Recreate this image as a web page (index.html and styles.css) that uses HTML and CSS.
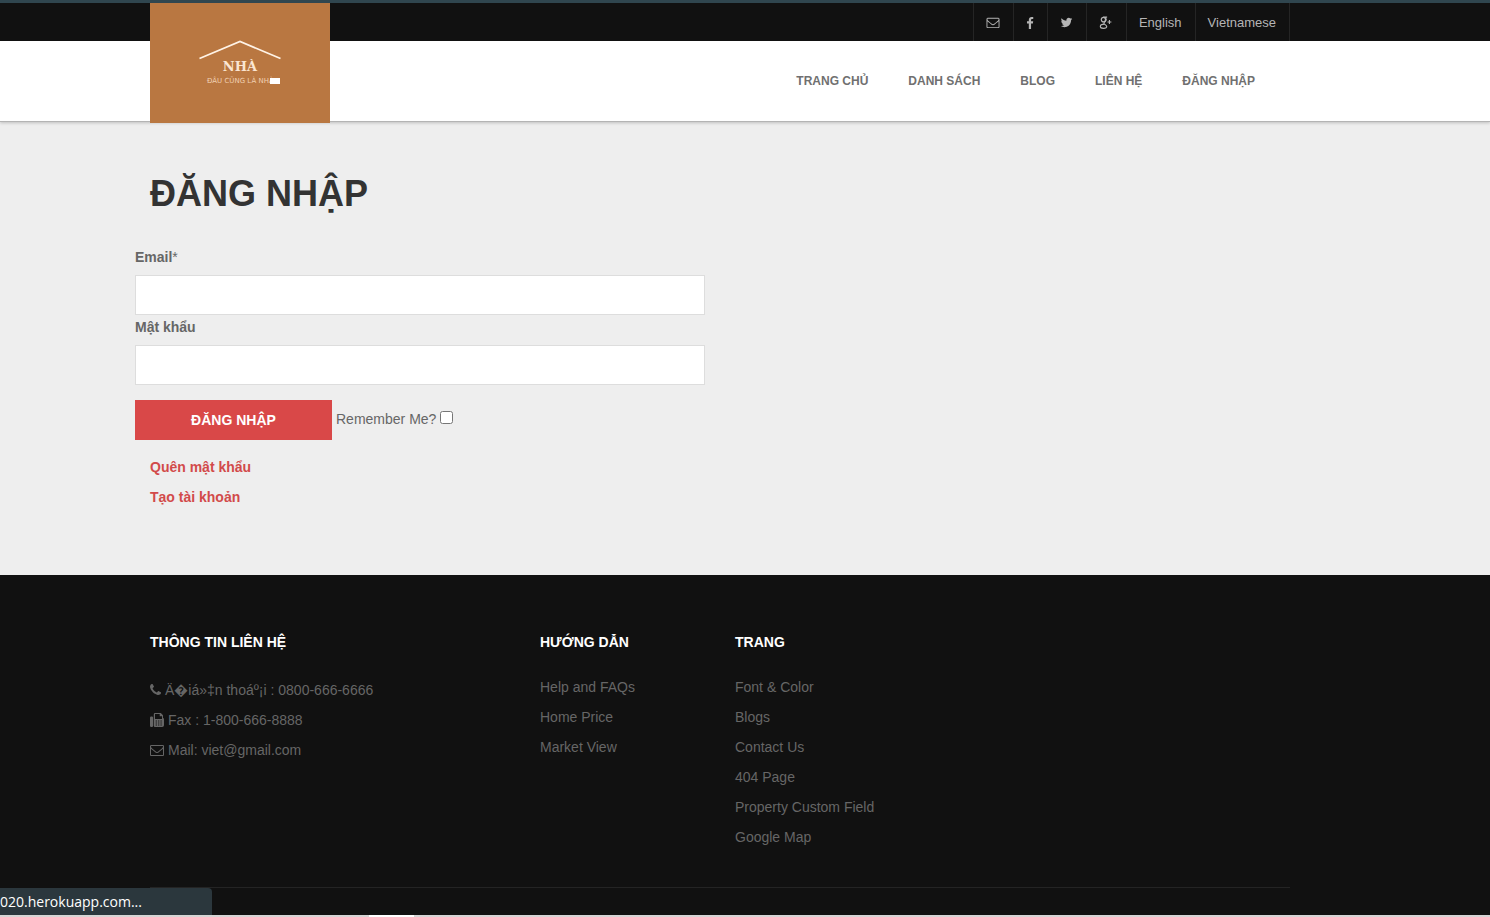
FILE: index.html
```html
<!DOCTYPE html>
<html lang="vi">
<head>
<meta charset="utf-8">
<meta name="viewport" content="width=device-width, initial-scale=1">
<title>Đăng nhập</title>
<link rel="stylesheet" href="styles.css">
</head>
<body>
<svg class="sprite" aria-hidden="true">
  <symbol id="envelope" viewBox="0 0 1792 1792"><path d="M1664 1504v-768q-32 36-69 66-268 206-426 338-51 43-83 67t-86.500 48.500-102.500 24.500h-2q-48 0-102.500-24.500t-86.500-48.500-83-67q-158-132-426-338-37-30-69-66v768q0 13 9.500 22.500t22.500 9.500h1472q13 0 22.500-9.500t9.500-22.500zm0-1051v-24.500l-.5-13-3-12.500-5.500-9-9-7.500-14-2.500h-1472q-13 0-22.500 9.500t-9.500 22.500q0 168 147 284 193 152 401 317 6 5 35 29.500t46 37.500 44.500 31.500 50.500 27.500 43 9h2q20 0 43-9t50.500-27.500 44.500-31.500 46-37.500 35-29.500q208-165 401-317 54-43 100.500-115.500t46.500-131.500zm128-37v1088q0 66-47 113t-113 47h-1472q-66 0-113-47t-47-113v-1088q0-66 47-113t113-47h1472q66 0 113 47t47 113z"/></symbol>
  <symbol id="facebook" viewBox="384 0 1024 1792"><path d="M1343 140v264h-157q-86 0-116 36t-30 108v189h293l-39 296h-254v759h-306v-759h-255v-296h255v-218q0-186 104-288.500t277-102.500q147 0 228 12z"/></symbol>
  <symbol id="twitter" viewBox="64 0 1664 1792"><path d="M1684 408q-67 98-162 167 1 14 1 42 0 130-38 259.500t-115.500 248.500-184.500 210.500-258 146-323 54.500q-271 0-496-145 35 4 78 4 225 0 401-138-105-2-188-64.500t-114-159.500q33 5 61 5 43 0 85-11-112-23-185.500-111.500t-73.500-205.500v-4q68 38 146 41-66-44-105-115t-39-154q0-88 44-163 121 149 294.500 238.500t371.500 99.500q-8-38-8-74 0-134 94.500-228.500t228.500-94.500q140 0 236 102 109-21 205-78-37 115-142 178 93-10 186-50z"/></symbol>
  <symbol id="gplus" viewBox="0 0 14 14"><g fill="none" stroke="currentColor"><ellipse cx="4.200" cy="3.900" rx="2.300" ry="2.500" stroke-width="1.300"/><path d="M4 1.200h4.200M6 1.500c1.400 1.300 1.300 3.200.3 4.300L5 7.100c-.6.700-.2 1.300.5 1.700 1.500.9 2.300 1.500 2.300 2.500 0 1.300-1.500 2-3.500 2S.9 12.500.9 11.200c0-1.600 1.900-2.400 4.300-2.400" stroke-width="1.200"/><path d="M8.600 6.500h4.200M10.700 4.400v4.200" stroke-width="1.200"/></g></symbol>
  <symbol id="phone" viewBox="192 128 1408 1536"><path d="M1600 1240q0 27-10 70.500t-21 68.500q-21 50-122 106-94 51-186 51-27 0-53-3.500t-57.500-12.500-47-14.500-55.500-20.500-49-18q-98-35-175-83-127-79-264-216t-216-264q-48-77-83-175-3-9-18-49t-20.500-55.500-14.500-47-12.500-57.500-3.500-53q0-92 51-186 56-101 106-122 25-11 68.500-21t70.500-10q14 0 21 3 18 6 53 76 11 19 30 54t35 63.500 31 53.500q3 4 17.500 25t21.500 35.500 7 28.500q0 20-28.500 50t-62 55-62 53-28.500 46q0 9 5 22.500t8.500 20.500 14 24 11.500 19q76 137 174 235t235 174q2 1 19 11.500t24 14 20.500 8.500 22.500 5q18 0 46-28.500t53-62 55-62 50-28.500q14 0 28.500 7t35.500 21.500 25 17.500q25 15 53.500 31t63.500 35 54 30q70 35 76 53 3 7 3 21z"/></symbol>
  <symbol id="fax" viewBox="0 0 14 14"><path fill-rule="evenodd" d="M1.200 3.500h.7q1.200 0 1.200 1.200v8.100Q3.100 14 1.900 14h-.7Q0 14 0 12.800V4.700Q0 3.500 1.200 3.500zM5 0h5.800L13 2.200v2.600q1 .5 1 1.600v5.800q0 1.800-1.800 1.800H5q-1.200 0-1.200-1.200V1.200Q3.800 0 5 0zM5 1v5h7V3.300H9.700V1zM5.700 7.500v1h1.200v-1zm2.400 0v1h1.200v-1zm2.400 0v1h1.200v-1zM5.700 9.500v1h1.200v-1zm2.400 0v1h1.200v-1zm2.400 0v1h1.200v-1zM5.700 11.500v1h1.200v-1zm2.400 0v1h1.200v-1zm2.400 0v1h1.200v-1z"/></symbol>
</svg>

<header class="header">
  <div class="topbar">
    <div class="container">
      <ul class="toplinks">
        <li><a href="#" aria-label="Email"><svg class="icon"><use href="#envelope"/></svg></a></li>
        <li><a href="#" aria-label="Facebook"><svg class="icon icon-narrow"><use href="#facebook"/></svg></a></li>
        <li><a href="#" aria-label="Twitter"><svg class="icon icon-mid"><use href="#twitter"/></svg></a></li>
        <li><a href="#" aria-label="Google Plus"><svg class="icon"><use href="#gplus"/></svg></a></li>
        <li><a href="#">English</a></li>
        <li><a href="#">Vietnamese</a></li>
      </ul>
    </div>
  </div>
  <div class="navbar">
    <div class="container navbar-row">
      <a class="logo" href="#" aria-label="Nhà">
        <svg class="logo-art" viewBox="0 0 180 120">
          <path d="M49.500 55.500L90 38.500 130.500 55.500" fill="none" stroke="#fff3e6" stroke-width="1.800"/>
          <text class="logo-name" x="90" y="68" text-anchor="middle">NHÀ</text>
          <text class="logo-tag" x="57" y="80">ĐÂU CŨNG LÀ NHÀ</text>
          <rect x="120" y="75" width="10" height="6" fill="#fff"/>
        </svg>
      </a>
      <nav class="nav">
        <a href="#">TRANG CHỦ</a>
        <a href="#">DANH SÁCH</a>
        <a href="#">BLOG</a>
        <a href="#">LIÊN HỆ</a>
        <a href="#">ĐĂNG NHẬP</a>
      </nav>
    </div>
  </div>
</header>

<main class="main">
  <div class="container">
    <h1 class="title">ĐĂNG NHẬP</h1>
    <form class="login">
      <label class="label" for="email">Email<span class="required">*</span></label>
      <input class="field" id="email" type="text">
      <label class="label" for="password">Mật khẩu</label>
      <input class="field" id="password" type="password">
      <div class="actions">
        <button class="submit" type="button">ĐĂNG NHẬP</button>
        <label class="remember" for="remember">Remember Me?</label>
        <input class="check" id="remember" type="checkbox">
      </div>
    </form>
    <div class="links">
      <a href="#">Quên mật khẩu</a>
      <a href="#">Tạo tài khoản</a>
    </div>
  </div>
</main>

<footer class="footer">
  <div class="container">
    <div class="columns">
      <section>
        <h2 class="heading">THÔNG TIN LIÊN HỆ</h2>
        <ul class="list contact">
          <li><svg class="icon icon-phone"><use href="#phone"/></svg>Ä&#xFFFD;iá»‡n thoáº¡i : 0800-666-6666</li>
          <li><svg class="icon"><use href="#fax"/></svg>Fax : 1-800-666-8888</li>
          <li><svg class="icon"><use href="#envelope"/></svg>Mail: viet@gmail.com</li>
        </ul>
      </section>
      <section>
        <h2 class="heading">HƯỚNG DẪN</h2>
        <ul class="list">
          <li><a href="#">Help and FAQs</a></li>
          <li><a href="#">Home Price</a></li>
          <li><a href="#">Market View</a></li>
        </ul>
      </section>
      <section>
        <h2 class="heading">TRANG</h2>
        <ul class="list">
          <li><a href="#">Font &amp; Color</a></li>
          <li><a href="#">Blogs</a></li>
          <li><a href="#">Contact Us</a></li>
          <li><a href="#">404 Page</a></li>
          <li><a href="#">Property Custom Field</a></li>
          <li><a href="#">Google Map</a></li>
        </ul>
      </section>
    </div>
    <div class="rule"></div>
  </div>
</footer>
<div class="status">020.herokuapp.com...</div>
<div class="edge"><span class="edge-tab"></span></div>
</body>
</html>
```

FILE: styles.css
```css
* { box-sizing: border-box; }

body {
  margin: 0;
  min-height: 100vh;
  display: flex;
  flex-direction: column;
  background: #111;
  color: #666;
  font: 14px/30px "Liberation Sans", Arial, sans-serif;
}

a { color: inherit; text-decoration: none; }
ul { list-style: none; margin: 0; padding: 0; }
.sprite { position: absolute; width: 0; height: 0; }

.header, .main, .footer { padding-right: 50px; }
.container { max-width: 1140px; margin: 0 auto; }

.icon { width: 14px; height: 14px; fill: currentColor; flex: none; }
.toplinks .icon { height: 13px; }
.icon-narrow { width: 8px; }
.icon-mid { width: 13px; }
.icon-phone { width: 11px; height: 12px; }

.header {
  position: relative;
  background: linear-gradient(#30464f 0 3px, #111 3px 41px, #fff 41px);
  border-bottom: 1px solid #b4b4b4;
  box-shadow: 0 1px 3px rgba(0, 0, 0, .2);
}
.topbar { padding-top: 3px; }
.toplinks {
  display: flex;
  justify-content: flex-end;
  height: 38px;
  color: #b5b5b5;
  font-size: 13px;
}
.toplinks li { border-left: 1px solid #252525; }
.toplinks li:last-child { border-right: 1px solid #252525; }
.toplinks a {
  display: flex;
  align-items: center;
  height: 100%;
  padding: 1px 13px 0 12px;
}

.navbar-row {
  display: flex;
  justify-content: space-between;
  align-items: flex-start;
  height: 80px;
}
.logo {
  position: relative;
  z-index: 1;
  width: 180px;
  height: 120px;
  margin-top: -38px;
  background: #b97741;
}
.logo-art { display: block; width: 100%; height: 100%; }
.logo-name { font: bold 13px "DejaVu Serif", serif; fill: #fbe6d2; }
.logo-tag { font: 7px "DejaVu Sans", sans-serif; fill: #f0d0b2; }
.nav {
  display: flex;
  gap: 40px;
  padding-right: 35px;
  color: #707070;
  font-size: 12px;
  font-weight: bold;
  line-height: 80px;
}

.main { background: #eee; padding-bottom: 63px; }
.title {
  margin: 0;
  padding: 50px 0 29px;
  color: #333;
  font-size: 36px;
  line-height: 44px;
}
.login { max-width: 570px; margin-left: -15px; }
.label {
  display: block;
  margin-bottom: 6px;
  font-weight: bold;
  line-height: 24px;
}
.required { font-weight: normal; }
.field {
  display: block;
  width: 100%;
  height: 40px;
  padding: 0 12px;
  border: 1px solid #ddd;
  background: #fff;
  color: #666;
  font: inherit;
}
.actions { display: flex; align-items: center; gap: 4px; margin: 15px 0 12px; }
.submit {
  width: 197px;
  height: 40px;
  padding: 0;
  border: 0;
  background: #d94848;
  color: #fff;
  font: bold 14px "Liberation Sans", Arial, sans-serif;
}
.remember { padding-bottom: 2px; }
.check { width: 13px; height: 13px; margin: 0 0 5px; }
.links { display: flex; flex-direction: column; align-items: flex-start; color: #d24a4a; font-weight: bold; }

.footer { padding-top: 52px; flex: 1; background: #111; color: #666; }
.columns {
  display: grid;
  grid-template-columns: 4fr 2fr 2fr 4fr;
  margin-right: -30px;
}
.heading { margin: 0 0 15px; color: #fff; font-size: 14px; line-height: 30px; }
.contact { padding-top: 3px; }
.contact li { display: flex; align-items: center; gap: 4px; }
.rule { margin-top: 35px; border-top: 1px solid #242424; }

.status {
  position: fixed;
  left: 0;
  bottom: 2px;
  width: 212px;
  height: 27px;
  border-radius: 0 4px 0 0;
  background: #2b373d;
  color: #fff;
  font: 14px/27px "Open Sans", "Noto Sans", sans-serif;
}
.edge {
  position: fixed;
  left: 0;
  right: 0;
  bottom: 0;
  height: 2px;
  background: #d6d4d4;
}
.edge-tab { display: block; width: 45px; height: 2px; margin-left: 369px; background: #fff; }
```
